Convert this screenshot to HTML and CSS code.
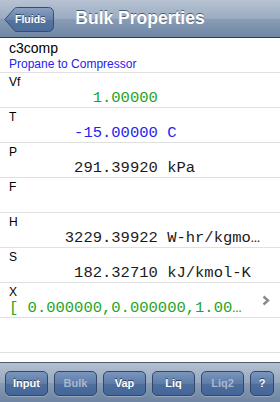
FILE: index.html
```html
<!DOCTYPE html>
<html lang="en">
<head>
<meta charset="UTF-8" />
<meta name="viewport" content="width=device-width, initial-scale=1" />
<title>Bulk Properties</title>
<link rel="stylesheet" href="styles.css">
</head>
<body>
  <div class="screen">
    <!-- Navigation bar -->
    <header class="navbar">
      <a class="back-btn" href="#">
        <svg class="back-shape" width="50" height="25" viewBox="0 0 50 25" aria-hidden="true">
          <defs>
            <linearGradient id="backFill" x1="0" y1="0" x2="0" y2="1">
              <stop offset="0" stop-color="#8aa1c2" />
              <stop offset="0.5" stop-color="#6582ab" />
              <stop offset="0.52" stop-color="#55749f" />
              <stop offset="1" stop-color="#4d6d9b" />
            </linearGradient>
          </defs>
          <path d="M0.8 12.5 L10.4 1.6 Q11.2 0.5 12.6 0.5 H44.5 A5 5 0 0 1 49.5 5.5 V19.5 A5 5 0 0 1 44.5 24.5 H12.6 Q11.2 24.5 10.4 23.4 Z"
                fill="url(#backFill)" stroke="#3b4c68" stroke-width="1" />
        </svg>
        <span>Fluids</span>
      </a>
      <h1>Bulk Properties</h1>
      <div></div>
    </header>

    <!-- Property table -->
    <main class="table">
      <div class="row head">
        <div class="name">c3comp</div>
        <div class="desc">Propane to Compressor</div>
      </div>
      <div class="row">
        <div class="label">Vf</div>
        <div class="value green">         1.00000</div>
      </div>
      <div class="row">
        <div class="label">T</div>
        <div class="value blue">       -15.00000 C</div>
      </div>
      <div class="row">
        <div class="label">P</div>
        <div class="value">       291.39920 kPa</div>
      </div>
      <div class="row">
        <div class="label">F</div>
        <div class="value"></div>
      </div>
      <div class="row">
        <div class="label">H</div>
        <div class="value">      3229.39922 W-hr/kgmole</div>
      </div>
      <div class="row">
        <div class="label">S</div>
        <div class="value">       182.32710 kJ/kmol-K</div>
      </div>
      <div class="row link">
        <div class="cell">
          <div class="label">X</div>
          <div class="value green">[ 0.000000,0.000000,1.000000 ]</div>
        </div>
        <svg class="chevron" width="8" height="11" viewBox="0 0 8 11" aria-hidden="true">
          <path d="M1.5 1.5 L6 5.5 L1.5 9.5" fill="none" stroke="#8a8a8a" stroke-width="2.4" />
        </svg>
      </div>
      <div class="row"></div>
    </main>

    <!-- Bottom toolbar -->
    <footer class="toolbar">
      <button class="tool-btn">Input</button>
      <button class="tool-btn disabled">Bulk</button>
      <button class="tool-btn">Vap</button>
      <button class="tool-btn">Liq</button>
      <button class="tool-btn disabled">Liq2</button>
      <button class="tool-btn small">?</button>
    </footer>
  </div>
</body>
</html>
```

FILE: styles.css
```css
/* --- Reset and basics --- */
* {
  box-sizing: border-box;
  margin: 0;
  padding: 0;
}
html, body {
  height: 100%;
  background: #fff;
  font-family: 'Liberation Sans', Arial, sans-serif;
}

.screen {
  width: 280px;
  height: 402px;
  display: flex;
  flex-direction: column;
  overflow: hidden;
}

/* --- Navigation bar --- */
.navbar {
  height: 38px;
  flex: none;
  display: grid;
  grid-template-columns: 1fr auto 1fr;
  align-items: center;
  background: linear-gradient(#b7c3d3 0%, #9aabc1 50%, #8a9db6 51%, #6f86a4 100%);
  border-bottom: 1px solid #2f3d52;
}
.navbar h1 {
  font-size: 17.5px;
  font-weight: 700;
  color: #fff;
  text-shadow: 0 -1px 0 #4a5a72;
}

.back-btn {
  position: relative;
  justify-self: start;
  margin-left: 4px;
  margin-top: 1px;
  width: 50px;
  height: 25px;
  display: flex;
  align-items: center;
  padding-left: 11px;
  text-decoration: none;
}
.back-shape {
  position: absolute;
  left: 0;
  top: 0;
}
.back-btn span {
  position: relative;
  font-size: 10.5px;
  font-weight: 700;
  color: #fff;
  text-shadow: 0 -1px 0 #32445f;
}

/* --- Table rows --- */
.table {
  flex: 1;
}
.row {
  height: 35px;
  padding: 2px 16px 0 9px;
  border-bottom: 1px solid #e0e0e0;
}
.name {
  font-size: 14px;
  line-height: 17px;
  color: #000;
}
.desc {
  font-size: 12px;
  line-height: 15px;
  color: #2323ee;
}
.label {
  font-size: 12px;
  line-height: 15px;
  color: #000;
}
.value {
  font-family: 'Liberation Mono', 'Courier New', monospace;
  font-size: 15.5px;
  line-height: 17px;
  color: #1a1a1a;
  white-space: pre;
  overflow: hidden;
  text-overflow: ellipsis;
}
.value.green { color: #23a523; }
.value.blue { color: #2424f0; }

.row.link {
  display: grid;
  grid-template-columns: minmax(0, 1fr) 18px;
  align-items: center;
  padding-right: 10px;
}
.row.link .cell {
  min-width: 0;
  padding-right: 2px;
  align-self: start;
}
.chevron {
  justify-self: end;
  margin-bottom: 2px;
}

/* --- Bottom toolbar --- */
.toolbar {
  height: 40px;
  flex: none;
  display: flex;
  align-items: center;
  gap: 6px;
  padding: 1px 0 0 5px;
  background: linear-gradient(#b4c0d0 0%, #97a8bf 50%, #899cb5 51%, #6d84a2 100%);
  border-top: 1px solid #4d5b70;
}
.tool-btn {
  width: 43px;
  height: 25px;
  border: 1px solid #33476a;
  border-radius: 5px;
  background: linear-gradient(#7b96bd 0%, #5d7ca8 50%, #4e6e9c 52%, #44659a 100%);
  font-family: 'Liberation Sans', Arial, sans-serif;
  font-size: 11px;
  font-weight: 700;
  color: #fff;
  text-shadow: 0 -1px 0 #2c3e5c;
  box-shadow: 0 1px 0 rgba(255, 255, 255, 0.25);
}
.tool-btn.disabled {
  color: #a9b8cd;
  text-shadow: none;
}
.tool-btn.small {
  width: 24px;
}
```
